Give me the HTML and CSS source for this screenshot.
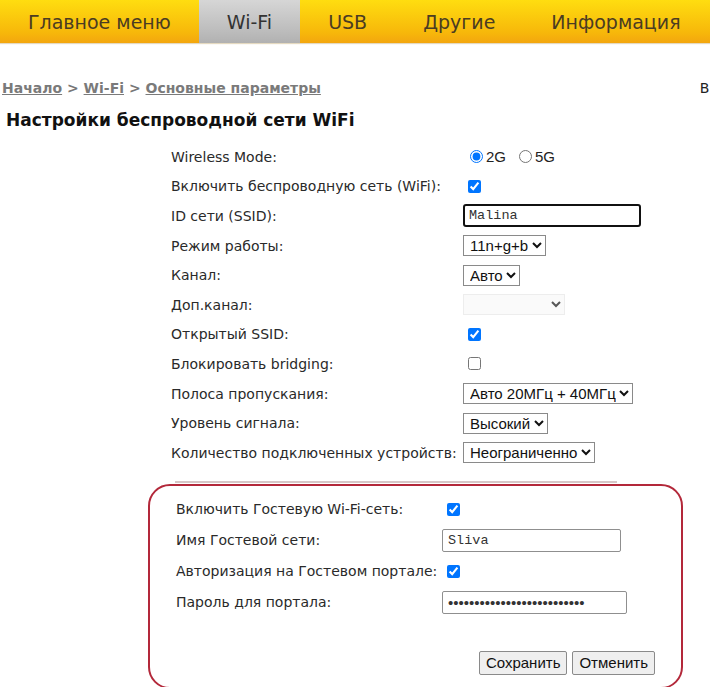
FILE: index.html
```html
<!DOCTYPE html>
<html lang="ru">
<head>
<meta charset="utf-8">
<title>Настройки беспроводной сети WiFi</title>
<link rel="stylesheet" href="styles.css">
</head>
<body>
<nav class="topnav">
  <a class="tab" href="#">Главное меню</a>
  <a class="tab active" href="#">Wi-Fi</a>
  <a class="tab" href="#">USB</a>
  <a class="tab" href="#">Другие</a>
  <a class="tab" href="#">Информация</a>
</nav>

<div class="crumbs">
  <div class="path"><a href="#">Начало</a> &gt; <a href="#">Wi-Fi</a> &gt; <a href="#">Основные параметры</a></div>
  <a class="logout" href="#">Выход</a>
</div>

<h1 class="title">Настройки беспроводной сети WiFi</h1>

<form class="settings">
  <div class="lbl">Wireless Mode:</div>
  <div class="ctl"><label class="opt"><input type="radio" name="band" checked>2G</label><label class="opt"><input type="radio" name="band">5G</label></div>

  <div class="lbl">Включить беспроводную сеть (WiFi):</div>
  <div class="ctl"><input type="checkbox" checked></div>

  <div class="lbl">ID сети (SSID):</div>
  <div class="ctl"><input class="txt focus" type="text" value="Malina"></div>

  <div class="lbl">Режим работы:</div>
  <div class="ctl"><select class="sel"><option>11n+g+b</option></select></div>

  <div class="lbl">Канал:</div>
  <div class="ctl"><select class="sel"><option>Авто</option></select></div>

  <div class="lbl">Доп.канал:</div>
  <div class="ctl"><select class="sel dis" disabled><option></option></select></div>

  <div class="lbl">Открытый SSID:</div>
  <div class="ctl"><input type="checkbox" checked></div>

  <div class="lbl">Блокировать bridging:</div>
  <div class="ctl"><input type="checkbox"></div>

  <div class="lbl">Полоса пропускания:</div>
  <div class="ctl"><select class="sel"><option>Авто 20МГц + 40МГц</option></select></div>

  <div class="lbl">Уровень сигнала:</div>
  <div class="ctl"><select class="sel"><option>Высокий</option></select></div>

  <div class="lbl">Количество подключенных устройств:</div>
  <div class="ctl"><select class="sel"><option>Неограниченно</option></select></div>
</form>

<hr class="sep">

<form class="guest">
  <div class="guest-grid">
    <div class="lbl">Включить Гостевую Wi-Fi-сеть:</div>
    <div class="ctl"><input type="checkbox" checked></div>

    <div class="lbl">Имя Гостевой сети:</div>
    <div class="ctl"><input class="txt gname" type="text" value="Sliva"></div>

    <div class="lbl">Авторизация на Гостевом портале:</div>
    <div class="ctl"><input type="checkbox" checked></div>

    <div class="lbl">Пароль для портала:</div>
    <div class="ctl"><input class="txt gpass" type="password" value="abcdefghijklmnopqrstuvwxyz"></div>
  </div>
  <div class="actions">
    <button type="button" class="btn">Сохранить</button>
    <button type="button" class="btn">Отменить</button>
  </div>
</form>
</body>
</html>
```

FILE: styles.css
```css
html, body {
  margin: 0;
  padding: 0;
  background: #fff;
  overflow: hidden;
}

body {
  font-family: "DejaVu Sans", Verdana, sans-serif;
  color: #222;
  width: 710px;
}

.topnav {
  display: flex;
  height: 43px;
  background: linear-gradient(#ffdd10, #f7b80a 75%, #f3a60e);
  box-shadow: 0 1px 1px #e4d9c0;
}

.tab {
  display: flex;
  align-items: center;
  flex-shrink: 0;
  white-space: nowrap;
  padding: 1px 28px 0 28px;
  font-size: 19px;
  color: #4b3c22;
  text-decoration: none;
}

.tab.active {
  background: linear-gradient(#d6d6d6, #bdbdbd 70%, #b1b1b1);
  color: #333;
}

.crumbs {
  display: flex;
  align-items: center;
  margin-top: 36px;
  padding-left: 2px;
  height: 18px;
  font-size: 14px;
  font-weight: bold;
  color: #777;
}

.crumbs a {
  color: #7a7a7a;
}

.path {
  white-space: nowrap;
}

.logout {
  margin-left: auto;
  margin-right: -37px;
  font-weight: normal;
  text-decoration: none;
  color: #222 !important;
}

.title {
  margin: 11px 0 0 6px;
  font-size: 17px;
  font-weight: bold;
  color: #111;
  height: 24px;
  line-height: 24px;
}

.settings {
  display: grid;
  grid-template-columns: 292px auto;
  grid-auto-rows: 29.6px;
  margin: 10px 0 0 171px;
  font-size: 14px;
}

.lbl {
  display: flex;
  align-items: center;
  white-space: nowrap;
  color: #2a2a2a;
}

.ctl {
  display: flex;
  align-items: center;
}

.opt {
  display: inline-flex;
  align-items: center;
  margin-left: 2px;
  margin-right: 6px;
  font-family: "Liberation Sans", Arial, sans-serif;
  font-size: 15px;
  color: #222;
}

.opt input {
  margin: 0 3px 0 5px;
}

input[type="checkbox"] {
  margin: 0 0 0 5px;
  width: 13px;
  height: 13px;
}

.txt {
  box-sizing: border-box;
  font-family: "Liberation Mono", "Courier New", monospace;
  font-size: 13.5px;
  color: #333;
  padding: 1px 5px;
  height: 23px;
  border: 1px solid #8f8f8f;
  border-radius: 2px;
  background: #fff;
}

.txt.focus {
  width: 178px;
  border: 2px solid #111;
  border-radius: 3px;
  padding: 0 4px;
}

.sel {
  box-sizing: border-box;
  height: 21px;
  font-family: "Liberation Sans", Arial, sans-serif;
  font-size: 15px;
  color: #111;
  border: 1px solid #8a8a8a;
  border-radius: 0;
  background: #fff;
  padding: 0 0 0 2px;
}

.sel.dis {
  width: 102px;
  border-color: #e6e6e6;
  background: #f8f8f8;
}

.sep {
  margin: 13px 0 0 175px;
  width: 442px;
  height: 2px;
  border: 0;
  background: #d6c7c7;
}

.guest {
  box-sizing: border-box;
  margin: 1px 0 0 148px;
  width: 535px;
  height: 205px;
  border: 2px solid #b3283a;
  border-radius: 22px;
  padding: 8px 26px 0 26px;
}

.guest-grid {
  display: grid;
  grid-template-columns: 266px auto;
  grid-auto-rows: 31px;
  font-size: 14px;
}

.gname {
  width: 179px;
}

.gpass {
  width: 185px;
  font-family: "Liberation Sans", Arial, sans-serif;
  font-size: 15px;
  letter-spacing: 0;
}

.actions {
  display: flex;
  justify-content: flex-end;
  gap: 5px;
  margin-top: 33px;
}

.btn {
  height: 24px;
  padding: 0 6px;
  font-family: "Liberation Sans", Arial, sans-serif;
  font-size: 15px;
  color: #111;
  background: #efefef;
  border: 1px solid #8a8a8a;
  border-radius: 2px;
}
```
